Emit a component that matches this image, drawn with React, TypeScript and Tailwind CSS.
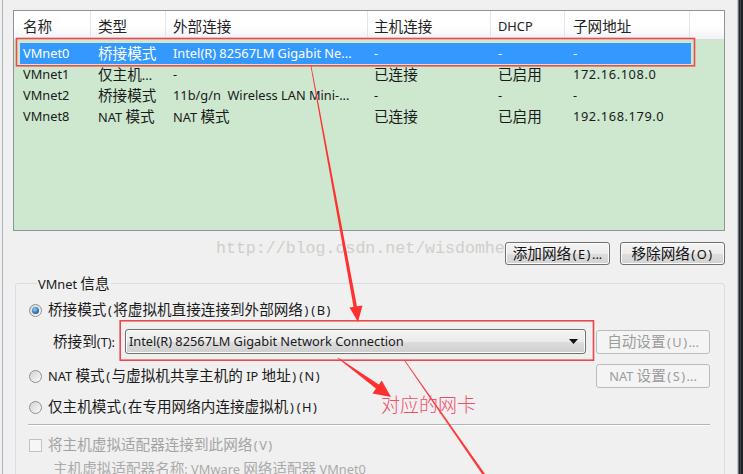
import React from "react";

const CJK_SPLIT = /([\u2E80-\u9FFF\uFF00-\uFFEF]+)/;
const CJK_TEST = /[\u2E80-\u9FFF\uFF00-\uFFEF]/;

function Latin({ s, wide }: { s: string; wide?: boolean }) {
  if (!wide) return <>{s}</>;
  return (
    <>
      {s.split(/([()])/).map((p, i) =>
        p === "(" || p === ")" ? (
          <span key={i} className="px-[1.5px]">
            {p}
          </span>
        ) : (
          <React.Fragment key={i}>{p}</React.Fragment>
        )
      )}
    </>
  );
}

function T({ s, big = "text-[14.6px]", wide }: { s: string; big?: string; wide?: boolean }) {
  return (
    <span className="whitespace-pre">
      {s.split(CJK_SPLIT).map((p, i) =>
        p && CJK_TEST.test(p) ? (
          <span key={i} className={big}>
            {p}
          </span>
        ) : (
          <Latin key={i} s={p} wide={wide} />
        )
      )}
    </span>
  );
}

const headW = ["w-[77px] pl-[9px]", "w-[75px] pl-[7px]", "w-[202px] pl-[7px]", "w-[123px] pl-[6px]", "w-[74px] pl-[7px]", "w-[125px] pl-[8px]"];
const rowW = ["w-[71px] pl-[3px]", "w-[75px] pl-[7px]", "w-[202px] pl-[7px]", "w-[123px] pl-[6px]", "w-[74px] pl-[7px]", "w-[126px] pl-[8px]"];

const headers = ["名称", "类型", "外部连接", "主机连接", "DHCP", "子网地址"];
const rows = [
  ["VMnet0", "桥接模式", "Intel(R) 82567LM Gigabit Ne...", "-", "-", "-"],
  ["VMnet1", "仅主机...", "-", "已连接", "已启用", "172.16.108.0"],
  ["VMnet2", "桥接模式", "11b/g/n  Wireless LAN Mini-...", "-", "-", "-"],
  ["VMnet8", "NAT 模式", "NAT 模式", "已连接", "已启用", "192.168.179.0"],
];

function Radio({ on }: { on?: boolean }) {
  return (
    <div className="flex h-[13px] w-[13px] shrink-0 items-center justify-center rounded-full border border-[#8e8f8f] bg-[linear-gradient(135deg,#d2d2d2,#fbfbfb)]">
      {on && <div className="h-[7px] w-[7px] rounded-full bg-[radial-gradient(circle_at_40%_35%,#8fd0fa,#1f5f9f_70%)]" />}
    </div>
  );
}

function taper(x0: number, y0: number, x1: number, y1: number, w0: number, w1: number) {
  const dx = x1 - x0;
  const dy = y1 - y0;
  const L = Math.hypot(dx, dy);
  const nx = -dy / L;
  const ny = dx / L;
  return `${x0 + (nx * w0) / 2},${y0 + (ny * w0) / 2} ${x1 + (nx * w1) / 2},${y1 + (ny * w1) / 2} ${x1 - (nx * w1) / 2},${y1 - (ny * w1) / 2} ${x0 - (nx * w0) / 2},${y0 - (ny * w0) / 2}`;
}

const btn =
  "flex h-[23px] w-[105px] shrink-0 items-center justify-center rounded-[3px] border border-[#707070] bg-[linear-gradient(#f4f4f4,#ececec_50%,#dedede_50%,#d2d2d2)] text-[#111] shadow-[inset_0_0_0_1px_#fcfcfc]";
const dbtn =
  "flex h-[24px] w-[114px] shrink-0 items-center justify-center rounded-[3px] border border-[#b8bcbf] bg-[#f4f4f4] text-[#9c9c9c]";

export default function App() {
  return (
    <div className="relative flex h-[474px] w-[743px] overflow-hidden bg-[#f0f0f0] font-['Noto_Sans','Noto_Sans_CJK_SC',sans-serif] text-[12.8px] text-[#1a1a1a]">
      <div className="w-[2px] shrink-0" />
      <div className="w-[1px] shrink-0 bg-[#a9b1b9]" />
      <div className="flex w-[734px] shrink-0 flex-col">
        {/* list */}
        <div className="ml-[10px] mt-[10px] flex h-[221px] w-[712px] shrink-0 flex-col border border-[#8d949a] bg-[#cde8cf]">
          <div className="flex h-[29px] shrink-0 border-b border-[#d9dcdf] bg-[linear-gradient(#ffffff,#ffffff_55%,#f1f2f4)]">
            {headers.map((h, i) => (
              <div key={i} className={`${headW[i]} flex items-center border-r border-[#e2e4e7] pt-[3px] text-[#222]`}>
                <T s={h} />
              </div>
            ))}
            <div className="flex-1" />
          </div>
          <div className="flex flex-col pt-[3px]">
            {rows.map((r, ri) => (
              <div
                key={ri}
                className={`ml-[6px] flex h-[21px] w-[671px] shrink-0 items-center whitespace-pre ${ri === 0 ? "bg-[#3399ff] text-white" : ""}`}
              >
                {r.map((c, ci) => (
                  <div key={ci} className={`${rowW[ci]} ${ci === 5 ? "tracking-[0.6px]" : ""} truncate`}>
                    <T s={c} />
                  </div>
                ))}
              </div>
            ))}
          </div>
        </div>

        {/* buttons */}
        <div className="mt-[11px] flex shrink-0 justify-end gap-[10px] pr-[12px]">
          <button className={btn}>
            <T s="添加网络(E)..." wide />
          </button>
          <button className={btn}>
            <T s="移除网络(O)" wide />
          </button>
        </div>

        {/* group */}
        <fieldset className="ml-[12px] mt-[9px] h-[230px] w-[710px] shrink-0 rounded-[3px] border border-[#d5dfe5] pl-[13px] pr-[14px]">
          <legend className="ml-[8px] px-[1px] leading-[18px] text-[#1a1a1a]">
            <T s="VMnet 信息" />
          </legend>
          <div className="mt-[7px] flex h-[20px] items-center">
            <Radio on />
            <div className="ml-[6px]">
              <T s="桥接模式(将虚拟机直接连接到外部网络)(B)" wide />
            </div>
          </div>
          <div className="mt-[9px] flex h-[25px] items-center">
            <div className="ml-[24px] w-[72px] shrink-0">
              <T s="桥接到(T):" />
            </div>
            <div className="flex h-[25px] w-[461px] shrink-0 items-center justify-between rounded-[3px] border border-[#707070] bg-[linear-gradient(#f3f3f3,#ebebeb_50%,#dddddd_50%,#cfcfcf)] pl-[3px] pr-[7px] shadow-[inset_0_0_0_1px_#fafafa]">
              <span>Intel(R) 82567LM Gigabit Network Connection</span>
              <svg width="9" height="5" viewBox="0 0 9 5">
                <path d="M0 0 H9 L4.5 5 Z" fill="#111" />
              </svg>
            </div>
            <div className={`ml-[10px] ${dbtn}`}>
              <T s="自动设置(U)..." wide />
            </div>
          </div>
          <div className="mt-[10px] flex h-[24px] items-center">
            <Radio />
            <div className="ml-[6px]">
              <T s="NAT 模式(与虚拟机共享主机的 IP 地址)(N)" wide />
            </div>
            <div className={`ml-auto ${dbtn}`}>
              <T s="NAT 设置(S)..." wide />
            </div>
          </div>
          <div className="mt-[9px] flex h-[20px] items-center">
            <Radio />
            <div className="ml-[6px]">
              <T s="仅主机模式(在专用网络内连接虚拟机)(H)" wide />
            </div>
          </div>
          <div className="ml-[-1px] mt-[7px] h-[2px] w-[682px] border-b border-t border-b-white border-t-[#b5b5b5]" />
          <div className="mt-[9px] flex h-[20px] items-center text-[#a3a3a3]">
            <div className="h-[13px] w-[13px] shrink-0 border border-[#c2c2c2] bg-[#f6f6f6]" />
            <div className="ml-[6px]">
              <T s="将主机虚拟适配器连接到此网络(V)" wide />
            </div>
          </div>
          <div className="ml-[24px] mt-[4px] flex h-[20px] items-center text-[#aaaaaa]">
            <T s="主机虚拟适配器名称: VMware 网络适配器 VMnet0" />
          </div>
        </fieldset>
      </div>
      {/* right dark edge */}
      <div className="w-[1px] shrink-0 bg-[#c3c7cb]" />
      <div className="w-[1px] shrink-0 bg-[#6b7176]" />
      <div className="w-[1px] shrink-0 bg-[#23282c]" />
      <div className="w-[1px] shrink-0 bg-[#3b4146]" />
      <div className="flex-1 bg-[#1d2226]" />

      {/* watermark */}
      <div className="pointer-events-none absolute left-[216px] top-[239px] whitespace-pre font-['Liberation_Mono',monospace] text-[16.6px] leading-[20px] text-[#cfcfca]">
        http://blog.csdn.net/wisdomhe
      </div>

      {/* annotations */}
      <svg className="pointer-events-none absolute left-0 top-0" width="743" height="474" viewBox="0 0 743 474">
        <rect x="16.5" y="38.5" width="678" height="27.3" fill="none" stroke="#f04848" strokeWidth="1.6" />
        <rect x="120.2" y="320.8" width="473.3" height="39.4" fill="none" stroke="#f04848" strokeWidth="1.6" />
        <polygon points={taper(311, 66, 355.5, 308, 0.8, 3.5)} fill="#ff3030" />
        <polygon points="349.5,307.5 362.5,305.5 358,322" fill="#ff3030" />
        <polygon points={taper(338, 358, 378, 387, 0.8, 5)} fill="#ff3030" />
        <polygon points="372.5,393.6 381.7,380.6 391,397" fill="#ff3030" />
        <polygon points={taper(405, 361, 487, 479, 0.8, 2.6)} fill="#ff3a3a" />
      </svg>
      <div className="pointer-events-none absolute left-[381px] top-[392px] font-['Noto_Sans_CJK_SC',sans-serif] text-[19px] font-light leading-[24px] text-[#ef4f6a]">
        对应的网卡
      </div>
    </div>
  );
}
